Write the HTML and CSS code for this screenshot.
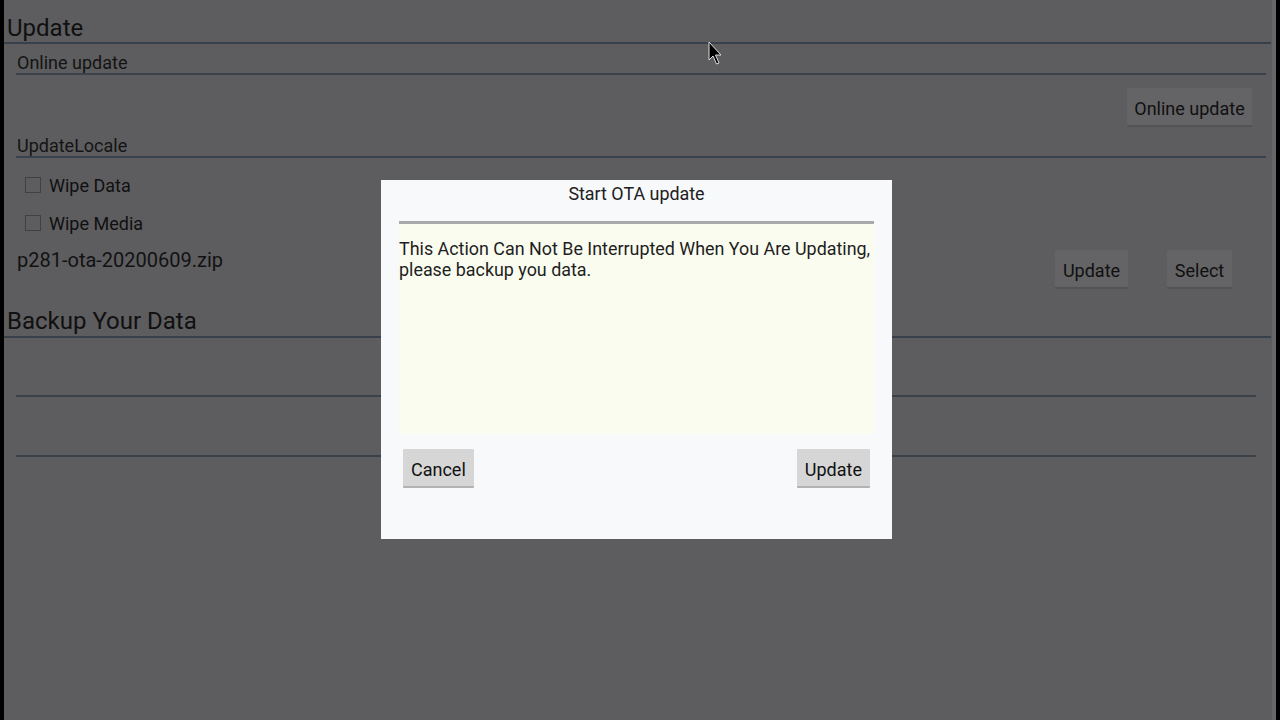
FILE: index.html
```
<!DOCTYPE html>
<html lang="en">
<head>
<meta charset="utf-8">
<title>Update</title>
<link rel="stylesheet" href="styles.css">
</head>
<body>
<div class="screen">
  <div class="sec-title first">Update</div>
  <div class="sub-title online">Online update</div>
  <div class="btn-row online-row">
    <button class="bg-btn">Online update</button>
  </div>
  <div class="sub-title locale">UpdateLocale</div>
  <label class="check-row first-check"><span class="box"></span><span>Wipe Data</span></label>
  <label class="check-row"><span class="box"></span><span>Wipe Media</span></label>
  <div class="file-row">
    <span class="file-name">p281-ota-20200609.zip</span>
    <div class="file-btns">
      <button class="bg-btn update-btn">Update</button>
      <button class="bg-btn select-btn">Select</button>
    </div>
  </div>
  <div class="sec-title backup">Backup Your Data</div>
  <div class="empty-row first-empty"></div>
  <div class="empty-row"></div>
</div>

<div class="dialog">
  <div class="dlg-title">Start OTA update</div>
  <div class="dlg-divider"></div>
  <div class="dlg-message">This Action Can Not Be Interrupted When You Are Updating, please backup you data.</div>
  <div class="dlg-actions">
    <button class="dlg-btn">Cancel</button>
    <button class="dlg-btn">Update</button>
  </div>
</div>

<svg class="cursor" width="14" height="26" viewBox="0 0 14 26">
  <path d="M1 1 L1 19 L5 15 L8.5 23 L11 22 L7.5 14 L13 14 Z" fill="#000" stroke="#ddd" stroke-width="1"/>
</svg>
</body>
</html>
```

FILE: styles.css
```
* { box-sizing: border-box; }
html, body {
  margin: 0;
  padding: 0;
  width: 1280px;
  height: 720px;
  overflow: hidden;
  background: #000;
  font-family: Roboto, "Noto Sans", "Liberation Sans", sans-serif;
}
.screen {
  margin-left: 4px;
  width: 1272px;
  height: 720px;
  background: #5d5d5f;
  border-right: 4px solid #68686a;
  color: #101010;
  display: flex;
  flex-direction: column;
}
.sec-title {
  font-size: 24px;
  line-height: 28px;
  padding-left: 3px;
  margin-right: 1px;
  border-bottom: 2px solid #38414b;
}
.sec-title.first { padding-top: 14px; padding-bottom: 0; }
.sec-title.backup { padding-top: 18px; padding-bottom: 1px; }
.sub-title {
  font-size: 18px;
  line-height: 21px;
  margin-left: 12px;
  margin-right: 6px;
  padding-left: 1px;
  border-bottom: 2px solid #3a424b;
  color: #141414;
}
.sub-title.online { padding-top: 8px; }
.sub-title.locale { padding-top: 8px; }
.btn-row {
  display: flex;
  justify-content: flex-end;
}
.online-row {
  margin-top: 13px;
  padding-right: 20px;
}
.bg-btn {
  font-family: inherit;
  font-size: 18px;
  color: #101010;
  height: 39px;
  background: #646466;
  border: none;
  border-bottom: 2px solid #535355;
  border-radius: 1px;
  padding: 3px 6px 0 6px;
  margin: 0;
}
.online-row .bg-btn { width: 125px; }
.check-row {
  display: flex;
  align-items: center;
  height: 38px;
  padding-left: 21px;
  font-size: 18px;
  color: #101010;
}
.first-check { margin-top: 8px; }
.box {
  width: 16px;
  height: 16px;
  border: 1.5px solid #414143;
  margin-right: 8px;
  margin-top: -1px;
}
.file-row {
  display: flex;
  justify-content: space-between;
  align-items: flex-start;
  padding-top: 8px;
  padding-right: 40px;
}
.file-name {
  margin-left: 13px;
  margin-top: -1px;
  font-size: 20px;
  line-height: 22px;
  color: #121212;
}
.file-btns {
  display: flex;
  gap: 39px;
}
.update-btn { width: 73px; }
.select-btn { width: 65px; }
.empty-row {
  height: 60px;
  margin-left: 12px;
  margin-right: 16px;
  border-bottom: 2px solid #3b4148;
}
.empty-row.first-empty { height: 59px; }

.dialog {
  position: absolute;
  left: 381px;
  top: 180px;
  width: 511px;
  height: 359px;
  background: #f8f9fa;
  display: flex;
  flex-direction: column;
  padding: 3px 18px 0 18px;
}
.dlg-title {
  text-align: center;
  font-size: 17.9px;
  line-height: 21px;
  color: #202020;
}
.dlg-divider {
  margin-top: 17px;
  height: 3px;
  background: #a9a9a9;
}
.dlg-message {
  height: 210px;
  background: #fafcef;
  font-size: 17.9px;
  line-height: 21px;
  color: #1e1e1e;
  padding-top: 14px;
}
.dlg-actions {
  display: flex;
  justify-content: space-between;
  padding: 15px 4px 0 4px;
}
.dlg-btn {
  font-family: inherit;
  font-size: 18px;
  color: #111;
  height: 39px;
  padding: 3px 8px 0 8px;
  background: #d6d6d6;
  border: none;
  border-bottom: 2px solid #b3b3b3;
  border-radius: 1px;
  margin: 0;
}
.cursor {
  position: absolute;
  left: 708px;
  top: 41px;
}
```
